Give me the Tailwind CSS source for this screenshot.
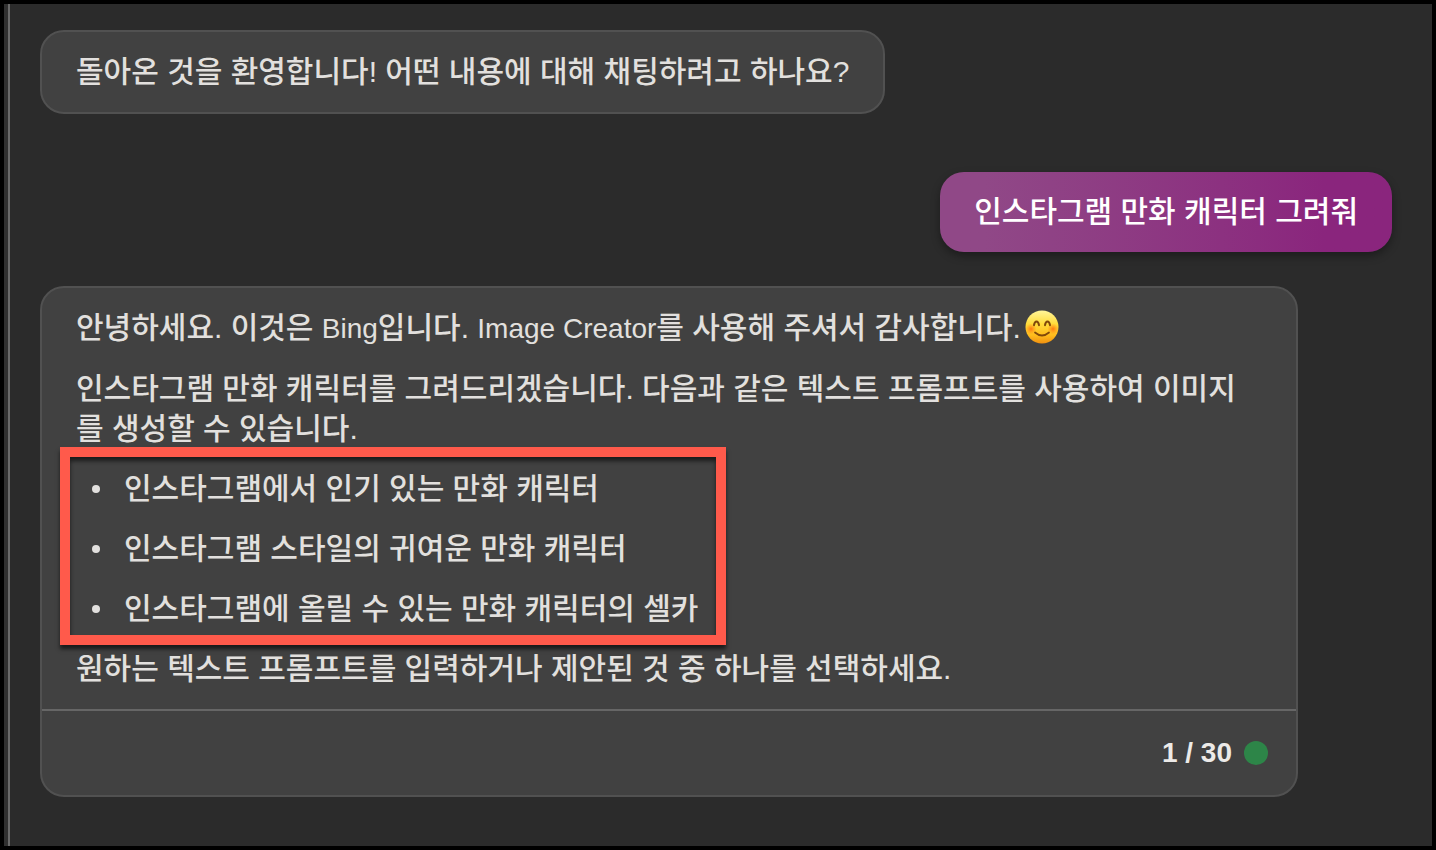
<!DOCTYPE html>
<html lang="ko">
  <head>
    <meta charset="UTF-8" />
    <meta name="viewport" content="width=device-width, initial-scale=1.0" />
    <title>Bing 채팅</title>
    <script src="https://cdn.jsdelivr.net/npm/@tailwindcss/browser@4"></script>
  </head>
  <body
    class="flex min-h-screen border-4 border-black bg-[#2b2b2b] font-['Liberation_Sans','Noto_Sans_CJK_KR',sans-serif] text-[30px] leading-10 font-medium text-[#e2e0de]"
  >
    <div class="w-[6px] shrink-0 border-r-2 border-[#6a6a6a] bg-[#303030]"></div>
    <main class="flex min-w-0 grow flex-col items-start pt-[26px] pr-10 pb-12 pl-[30px]">
      <p class="rounded-3xl border-2 border-[#515151] bg-[#414141] px-[34px] py-5">
        돌아온 것을 환영합니다! 어떤 내용에 대해 채팅하려고 하나요?
      </p>
      <p
        class="mt-[58px] self-end rounded-3xl bg-linear-to-r from-[#904887] from-10% to-[#8a257d] to-85% px-[34px] py-5 text-white shadow-[0_4px_8px_rgba(0,0,0,0.35)]"
      >
        인스타그램 만화 캐릭터 그려줘
      </p>
      <article
        class="mt-[34px] mr-[94px] self-stretch rounded-3xl border-2 border-[#515151] bg-[#414141]"
      >
        <div class="flex flex-col gap-5 px-[34px] py-5">
          <p>
            안녕하세요. 이것은 <span class="text-[28px]">Bing</span>입니다.
            <span class="text-[28px]">Image Creator</span>를 사용해 주셔서 감사합니다.<svg
              class="ml-1 inline size-[34px] align-top mt-[2px]"
              viewBox="0 0 34 34"
              role="img"
              aria-label="웃는 얼굴"
            >
              <defs>
                <linearGradient id="face" x1="0" y1="0" x2="0" y2="1">
                  <stop offset="0" stop-color="#fff59a" />
                  <stop offset="0.4" stop-color="#ffdc3c" />
                  <stop offset="0.75" stop-color="#ffbc1c" />
                  <stop offset="1" stop-color="#f09010" />
                </linearGradient>
                <radialGradient id="cheek">
                  <stop offset="0" stop-color="#ff7a10" />
                  <stop offset="1" stop-color="#ff8c14" stop-opacity="0" />
                </radialGradient>
              </defs>
              <circle cx="17" cy="17" r="16.5" fill="url(#face)" />
              <circle cx="6" cy="19" r="5.5" fill="url(#cheek)" />
              <circle cx="28" cy="19" r="5.5" fill="url(#cheek)" />
              <g fill="none" stroke="#80480a" stroke-linecap="round" stroke-linejoin="round">
                <path d="M9 15.2Q9.6 11.4 11.5 11.4Q13.4 11.4 14 15.2" stroke-width="2" />
                <path d="M20 15.2Q20.6 11.4 22.5 11.4Q24.4 11.4 25 15.2" stroke-width="2" />
                <path d="M10 22.5Q17 28.5 24 22.5" stroke-width="1.8" />
              </g>
            </svg>
          </p>
          <p>
            인스타그램 만화 캐릭터를 그려드리겠습니다. 다음과 같은 텍스트 프롬프트를 사용하여 이미지를 생성할 수 있습니다.
          </p>
          <div class="relative w-fit">
            <ul class="flex flex-col gap-5 pl-4">
              <li class="flex items-center gap-6 before:size-2 before:rounded-full before:bg-current">
                인스타그램에서 인기 있는 만화 캐릭터
              </li>
              <li class="flex items-center gap-6 before:size-2 before:rounded-full before:bg-current">
                인스타그램 스타일의 귀여운 만화 캐릭터
              </li>
              <li class="flex items-center gap-6 before:size-2 before:rounded-full before:bg-current">
                인스타그램에 올릴 수 있는 만화 캐릭터의 셀카
              </li>
            </ul>
            <div
              class="pointer-events-none absolute -top-[22px] -right-7 -bottom-4 -left-4 border-10 border-[#ff5a4b] shadow-[0_4px_4px_rgba(0,0,0,0.6),inset_0_4px_4px_rgba(0,0,0,0.6)]"
            ></div>
          </div>
          <p>원하는 텍스트 프롬프트를 입력하거나 제안된 것 중 하나를 선택하세요.</p>
        </div>
        <footer
          class="flex items-center justify-end gap-3 border-t-2 border-[#666] px-7 py-[22px] text-[28px] font-bold text-[#eceae8]"
        >
          <span>1 / 30</span>
          <span class="size-6 rounded-full bg-[#2d8548]"></span>
        </footer>
      </article>
    </main>
  </body>
</html>
